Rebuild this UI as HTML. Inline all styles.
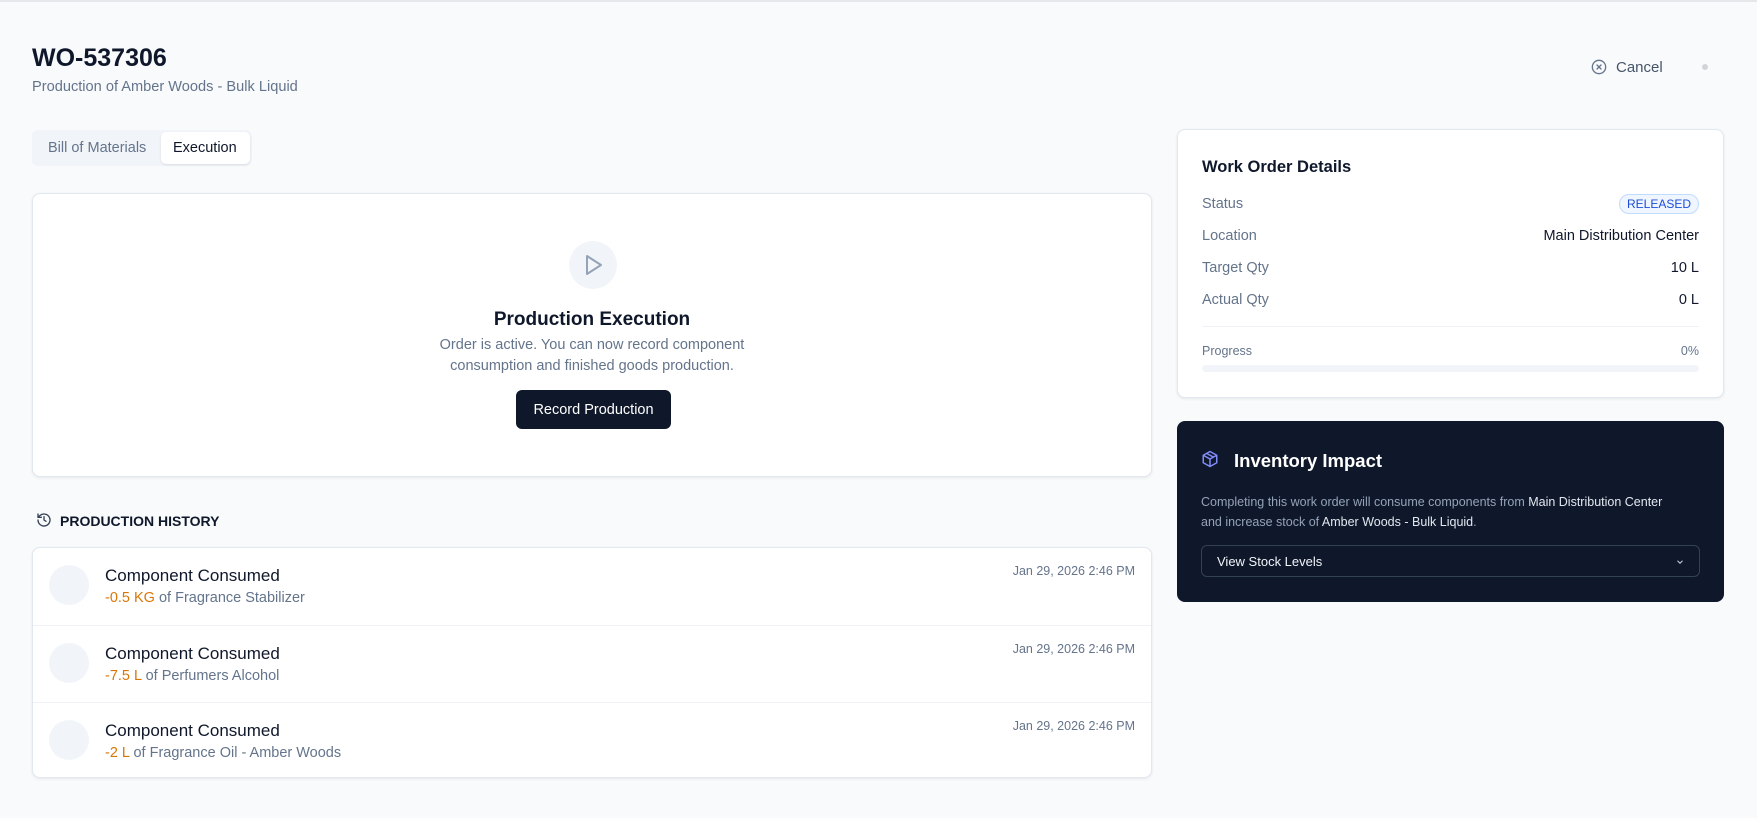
<!DOCTYPE html>
<html><head><meta charset="utf-8"><style>
*{box-sizing:border-box;margin:0;padding:0}
body{width:1757px;height:818px;background:#f8fafc;font-family:"Liberation Sans",sans-serif;color:#0f172a;position:relative;overflow:hidden}
.a{position:absolute;white-space:nowrap}
.card{position:absolute;background:#fff;border:1px solid #e2e8f0;border-radius:8px;box-shadow:0 1px 3px rgba(0,0,0,.08)}
.muted{color:#64748b}
.row{position:absolute;left:0;right:0;height:77px;border-top:1px solid #eef1f5}
.row:first-child{border-top:none}
.av{position:absolute;left:16px;top:17px;width:40px;height:40px;border-radius:50%;background:#f1f5f9}
.rt{position:absolute;left:72px;top:18px;font-size:17px;color:#0f172a}
.rs{position:absolute;left:72px;top:42px;font-size:14.5px;color:#64748b}
.rs b{font-weight:normal;color:#d97706}
.rd{position:absolute;right:16px;top:16px;font-size:12.5px;color:#64748b}
.kv{position:absolute;left:24px;right:24px;font-size:14.5px}
.kv span:first-child{color:#64748b}
.kv span:last-child{position:absolute;right:0;color:#0f172a}
</style></head><body>
<div class="a" style="left:0;top:0;width:1757px;height:2px;background:#e5e7eb"></div>
<div class="a" style="left:32px;top:44px;font-size:25px;font-weight:bold;color:#0f172a">WO-537306</div>
<div class="a muted" style="left:32px;top:79px;font-size:14.6px">Production of Amber Woods - Bulk Liquid</div>

<svg class="a" style="left:1591px;top:59px" width="16" height="16" viewBox="0 0 24 24" fill="none" stroke="#64748b" stroke-width="2" stroke-linecap="round"><circle cx="12" cy="12" r="10"/><path d="M15 9l-6 6M9 9l6 6"/></svg>
<div class="a" style="left:1616px;top:59px;font-size:15px;color:#475569">Cancel</div>
<div class="a" style="left:1702px;top:64px;width:6px;height:6px;border-radius:50%;background:#d1d5db"></div>

<div class="a" style="left:32px;top:130px;width:220px;height:36px;background:#f1f5f9;border-radius:6px"></div>
<div class="a muted" style="left:48px;top:140px;font-size:14.5px">Bill of Materials</div>
<div class="a" style="left:161px;top:132px;width:89px;height:32px;background:#fff;border-radius:5px;box-shadow:0 1px 2px rgba(0,0,0,.1)"></div>
<div class="a" style="left:173px;top:140px;font-size:14.5px;color:#0f172a">Execution</div>

<div class="card" style="left:32px;top:193px;width:1120px;height:284px">
  <div class="a" style="left:536px;top:47px;width:48px;height:48px;border-radius:50%;background:#f1f5f9"></div>
  <svg class="a" style="left:548px;top:59px" width="24" height="24" viewBox="0 0 24 24" fill="none" stroke="#94a3b8" stroke-width="2" stroke-linejoin="round"><path d="M6 3l14 9-14 9z"/></svg>
  <div class="a" style="left:0;right:0;top:115px;text-align:center;font-size:19px;font-weight:bold">Production Execution</div>
  <div class="a muted" style="left:0;right:0;top:141px;text-align:center;font-size:14.5px;line-height:21px">Order is active. You can now record component<br>consumption and finished goods production.</div>
  <div class="a" style="left:483px;top:196px;width:155px;height:39px;background:#0f172a;border-radius:6px;color:#fff;font-size:14.5px;text-align:center;line-height:40px">Record Production</div>
</div>

<svg class="a" style="left:36px;top:512px" width="16" height="16" viewBox="0 0 24 24" fill="none" stroke="#334155" stroke-width="2" stroke-linecap="round" stroke-linejoin="round"><path d="M3 12a9 9 0 1 0 3-6.7L3 8"/><path d="M3 3v5h5"/><path d="M12 7v5l3 2"/></svg>
<div class="a" style="left:60px;top:513px;font-size:14px;font-weight:bold;color:#0f172a">PRODUCTION HISTORY</div>

<div class="card" style="left:32px;top:547px;width:1120px;height:231px">
  <div class="row" style="top:0"><div class="av"></div><div class="rt">Component Consumed</div><div class="rs"><b>-0.5 KG</b> of Fragrance Stabilizer</div><div class="rd">Jan 29, 2026 2:46 PM</div></div>
  <div class="row" style="top:77px"><div class="av"></div><div class="rt">Component Consumed</div><div class="rs"><b>-7.5 L</b> of Perfumers Alcohol</div><div class="rd">Jan 29, 2026 2:46 PM</div></div>
  <div class="row" style="top:154px"><div class="av"></div><div class="rt">Component Consumed</div><div class="rs"><b>-2 L</b> of Fragrance Oil - Amber Woods</div><div class="rd">Jan 29, 2026 2:46 PM</div></div>
</div>

<div class="card" style="left:1177px;top:129px;width:547px;height:269px">
  <div class="a" style="left:24px;top:28px;font-size:16.5px;font-weight:bold">Work Order Details</div>
  <div class="kv" style="top:66px"><span>Status</span><span style="top:-2px;font-size:12px;color:#1d4ed8;background:#eff6ff;border:1px solid #bfdbfe;border-radius:10px;padding:2px 7px">RELEASED</span></div>
  <div class="kv" style="top:98px"><span>Location</span><span>Main Distribution Center</span></div>
  <div class="kv" style="top:130px"><span>Target Qty</span><span>10 L</span></div>
  <div class="kv" style="top:162px"><span>Actual Qty</span><span>0 L</span></div>
  <div class="a" style="left:24px;right:24px;top:196px;height:1px;background:#eef1f5"></div>
  <div class="kv" style="top:214px;font-size:12.5px"><span>Progress</span><span style="color:#64748b">0%</span></div>
  <div class="a" style="left:24px;right:24px;top:235px;height:7px;background:#f1f5f9;border-radius:4px"></div>
</div>

<div class="a" style="left:1177px;top:421px;width:547px;height:181px;background:#0f172a;border-radius:8px">
  <svg class="a" style="left:24px;top:29px" width="18" height="18" viewBox="0 0 24 24" fill="none" stroke="#818cf8" stroke-width="2" stroke-linejoin="round"><path d="M12 2l9 5v10l-9 5-9-5V7z"/><path d="M3 7l9 5 9-5M12 12v10M7.5 4.5l9 5"/></svg>
  <div class="a" style="left:57px;top:29px;font-size:18.5px;font-weight:bold;color:#fff">Inventory Impact</div>
  <div class="a" style="left:24px;top:71px;font-size:12.5px;line-height:20px;color:#94a3b8">Completing this work order will consume components from <span style="color:#e2e8f0">Main Distribution Center</span><br>and increase stock of <span style="color:#e2e8f0">Amber Woods - Bulk Liquid</span>.</div>
  <div class="a" style="left:24px;top:124px;width:499px;height:32px;border:1px solid #334155;border-radius:6px">
    <div class="a" style="left:15px;top:8px;font-size:13px;color:#f1f5f9">View Stock Levels</div>
    <svg class="a" style="right:14px;top:11px" width="10" height="10" viewBox="0 0 24 24" fill="none" stroke="#cbd5e1" stroke-width="2.5"><path d="M6 9l6 6 6-6"/></svg>
  </div>
</div>
</body></html>
